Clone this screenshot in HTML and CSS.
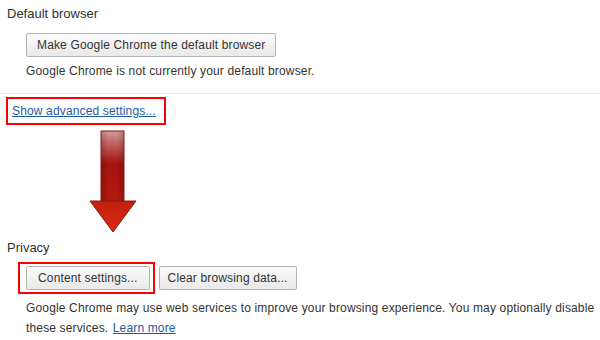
FILE: index.html
```html
<!DOCTYPE html>
<html>
<head>
	<meta charset="utf-8">
	<meta name="viewport" content="width=device-width, initial-scale=1">
	<title>Settings</title>
	<link rel="stylesheet" href="styles.css">
</head>
<body>
	<section class="group">
		<h3 class="group-title">Default browser</h3>
		<div class="group-body">
			<button class="btn btn-wide">Make Google Chrome the default browser</button>
			<p class="note">Google Chrome is not currently your default browser.</p>
		</div>
	</section>
	<div class="separator"></div>
	<div class="advanced">
		<a class="mark" href="#">Show advanced settings...</a>
	</div>
	<svg class="arrow" width="50" height="104" viewBox="0 0 50 104">
		<defs>
			<linearGradient id="shaft" x1="0" y1="0" x2="0" y2="1">
				<stop offset="0" stop-color="#d89a9a"/>
				<stop offset="0.15" stop-color="#c26a6a"/>
				<stop offset="0.45" stop-color="#a5150f"/>
				<stop offset="1" stop-color="#b41a0e"/>
			</linearGradient>
			<linearGradient id="shaftEdge" x1="0" y1="0" x2="1" y2="0">
				<stop offset="0" stop-color="#000" stop-opacity="0.18"/>
				<stop offset="0.3" stop-color="#000" stop-opacity="0"/>
				<stop offset="0.7" stop-color="#000" stop-opacity="0"/>
				<stop offset="1" stop-color="#000" stop-opacity="0.18"/>
			</linearGradient>
			<linearGradient id="head" x1="0" y1="0" x2="0" y2="1">
				<stop offset="0" stop-color="#c0200e"/>
				<stop offset="1" stop-color="#d92b12"/>
			</linearGradient>
		</defs>
		<rect x="12" y="1" width="23" height="72" fill="url(#shaft)" stroke="#8e1510" stroke-width="1"/>
		<rect x="12.5" y="1.5" width="22" height="71" fill="url(#shaftEdge)"/>
		<path d="M1 71 H47 L24 102 Z" fill="url(#head)" stroke="#8a1a10" stroke-width="1" stroke-linejoin="round"/>
	</svg>
	<section class="group">
		<h3 class="group-title">Privacy</h3>
		<div class="group-body">
			<div class="btn-row">
				<span class="mark mark-btn"><button class="btn">Content settings...</button></span>
				<button class="btn">Clear browsing data...</button>
			</div>
			<p class="note note-long">Google Chrome may use web services to improve your browsing experience. You may optionally disable these services. <a class="link" href="#">Learn more</a></p>
		</div>
	</section>
</body>
</html>
```

FILE: styles.css
```css
body{
	margin: 0;
	background: #fff;
	color: #333;
	font-family: "Liberation Sans", Arial, sans-serif;
	font-size: 12px;
	letter-spacing: 0.15px;
}
.group-title{
	margin: 0;
	padding: 6px 0 0 7px;
	font-size: 13px;
	font-weight: normal;
	line-height: 16px;
	letter-spacing: 0;
	color: #303030;
}
.group-body{
	padding-left: 26px;
}
.btn{
	height: 24px;
	padding: 0 10px;
	border: 1px solid #b4b4b4;
	border-radius: 2px;
	background: linear-gradient(#fbfbfb, #e9e9e9);
	color: #333;
	font-family: inherit;
	font-size: 12px;
	letter-spacing: 0.15px;
}
.btn-wide{
	margin-top: 11px;
	display: block;
}
.note{
	margin: 0;
	line-height: 20px;
	padding-top: 4px;
}
.separator{
	margin: 12px 0 0 0;
	height: 1px;
	background: #e6e6e6;
}
.advanced{
	padding: 3px 0 0 6px;
}
.mark{
	display: inline-block;
	border: 2px solid #f00;
}
.advanced .mark{
	padding: 4px 8px 4px 4px;
	line-height: 16px;
	color: #1e5ba0;
}
.arrow{
	display: block;
	margin: 5px 0 0 89px;
}
.btn-row{
	display: flex;
	align-items: center;
	gap: 4px;
	margin: 6px 0 0 -8px;
}
.mark-btn{
	padding: 2px 3px 2px 6px;
	display: flex;
}
.mark-btn .btn{
	padding: 0 11px;
}
.btn-row > .btn{
	padding: 0 8px;
}
.note-long{
	padding-top: 4px;
	width: 572px;
}
.link{
	color: #1e5ba0;
	margin-left: 1px;
}
```
